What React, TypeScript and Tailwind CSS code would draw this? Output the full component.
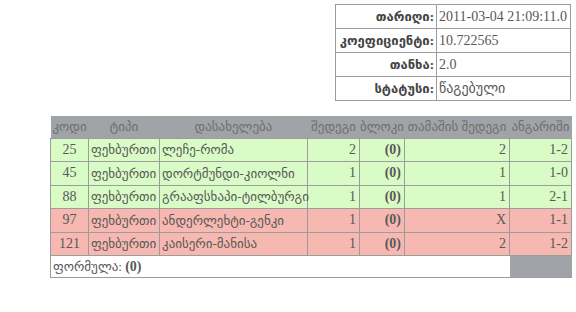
const rows = [
  { code: "25", type: "ფეხბურთი", name: "ლეჩე-რომა", block: "(0)", game: "2", score: "1-2", bg: "bg-[#d9fcc6]", shown: "2" },
  { code: "45", type: "ფეხბურთი", name: "დორტმუნდი-კიოლნი", block: "(0)", game: "1", score: "1-0", bg: "bg-[#d9fcc6]", shown: "1" },
  { code: "88", type: "ფეხბურთი", name: "გრააფსხაპი-ტილბურგი", block: "(0)", game: "1", score: "2-1", bg: "bg-[#d9fcc6]", shown: "1" },
  { code: "97", type: "ფეხბურთი", name: "ანდერლეხტი-გენკი", block: "(0)", game: "X", score: "1-1", bg: "bg-[#f6b8b0]", shown: "1" },
  { code: "121", type: "ფეხბურთი", name: "კაისერი-მანისა", block: "(0)", game: "2", score: "1-2", bg: "bg-[#f6b8b0]", shown: "1" },
];

const info = [
  { label: "თარიღი:", value: "2011-03-04 21:09:11.0" },
  { label: "კოეფიციენტი:", value: "10.722565" },
  { label: "თანხა:", value: "2.0" },
  { label: "სტატუსი:", value: "წაგებული" },
];

export default function App() {
  return (
    <div className="w-[576px] h-[312px] bg-white text-[#585858] font-['Liberation_Serif','DejaVu_Sans',serif] text-[14px]">
      <div className="flex justify-end pt-[4px] pr-[5px]">
        <table className="border-collapse">
          <tbody>
            {info.map((r) => (
              <tr key={r.label} className="h-[24px]">
                <td className="w-[101px] border border-[#9c9c9c] px-[2px] text-right font-bold text-[13px] text-[#444] leading-none">{r.label}</td>
                <td className="w-[134px] border border-[#9c9c9c] px-[2px] text-left leading-none">{r.value}</td>
              </tr>
            ))}
          </tbody>
        </table>
      </div>

      <div className="pl-[50px] pt-[15px]">
        <table className="border-collapse table-fixed w-[521px]">
          <colgroup>
            <col className="w-[38px]" />
            <col className="w-[71px]" />
            <col className="w-[148px]" />
            <col className="w-[52px]" />
            <col className="w-[45px]" />
            <col className="w-[105px]" />
            <col className="w-[62px]" />
          </colgroup>
          <thead>
            <tr className="h-[22px] bg-[#a0a4a8] text-[#6e6e6e] text-[13px]">
              <th className="font-normal text-center">კოდი</th>
              <th className="font-normal text-center">ტიპი</th>
              <th className="font-normal text-center">დასახელება</th>
              <th className="font-normal text-center whitespace-nowrap">შედეგი</th>
              <th className="font-normal text-center">ბლოკი</th>
              <th className="font-normal text-center whitespace-nowrap">თამაშის შედეგი</th>
              <th className="font-normal text-center">ანგარიში</th>
            </tr>
          </thead>
          <tbody>
            {rows.map((r) => (
              <tr key={r.code} className={`h-[23.5px] ${r.bg}`}>
                <td className="border border-[#9c9c9c] text-center leading-none">{r.code}</td>
                <td className="border border-[#9c9c9c] px-[2px] text-[13px] whitespace-nowrap leading-none">{r.type}</td>
                <td className="border border-[#9c9c9c] pl-[2px] pr-0 text-[13px] whitespace-nowrap leading-none">{r.name}</td>
                <td className="border border-[#9c9c9c] px-[3px] text-right leading-none">{r.shown}</td>
                <td className="border border-[#9c9c9c] px-[3px] text-right font-bold leading-none">{r.block}</td>
                <td className="border border-[#9c9c9c] px-[3px] text-right leading-none">{r.game}</td>
                <td className="border border-[#9c9c9c] px-[3px] text-right leading-none">{r.score}</td>
              </tr>
            ))}
            <tr className="h-[22px]">
              <td colSpan={6} className="border-l border-b border-[#9c9c9c] px-[2px] text-[13px] leading-none">
                ფორმულა: <b className="text-[14px]">(0)</b>
              </td>
              <td className="bg-[#a0a4a8] border-b border-[#9c9c9c]"></td>
            </tr>
          </tbody>
        </table>
      </div>
    </div>
  );
}
